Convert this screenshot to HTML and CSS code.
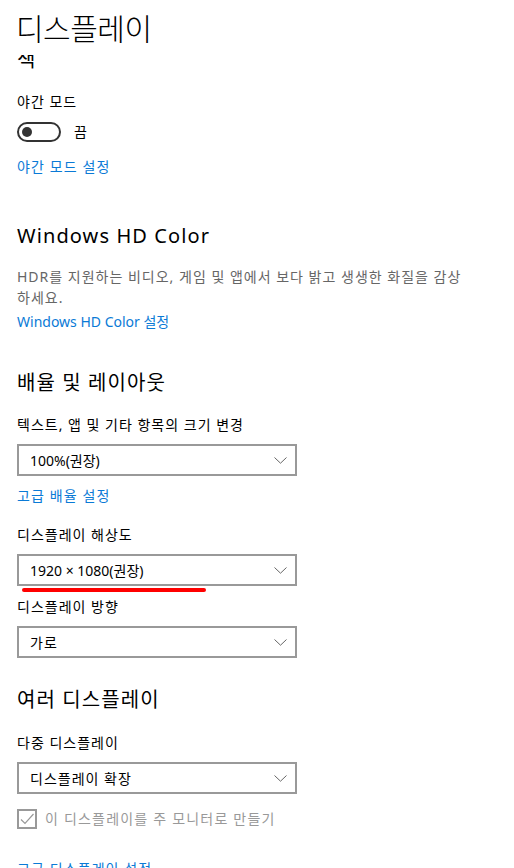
FILE: index.html
```html
<!DOCTYPE html>
<html lang="ko">
<head>
  <meta charset="UTF-8">
  <meta name="viewport" content="width=device-width, initial-scale=1.0">
  <title>디스플레이</title>
  <link rel="stylesheet" href="styles.css">
</head>
<body>
  <header class="page-header">
    <h1>디스플레이</h1>
  </header>

  <main class="content">
    <!-- 스크롤로 가려진 "색" 섹션 제목 -->
    <div class="clipped">
      <h2 class="clipped-title">색</h2>
    </div>

    <p class="label gap-night">야간 모드</p>
    <div class="toggle-row">
      <span class="toggle"><span class="knob"></span></span>
      <span class="toggle-text">끔</span>
    </div>
    <a class="link gap-15" href="#">야간 모드 설정</a>

    <h2 class="section-title gap-45">Windows HD Color</h2>
    <p class="desc">HDR를 지원하는 비디오, 게임 및 앱에서 보다 밝고 생생한 화질을 감상하세요.</p>
    <a class="link latin gap-4" href="#">Windows HD Color 설정</a>

    <h2 class="section-title gap-37">배율 및 레이아웃</h2>
    <p class="label gap-18">텍스트, 앱 및 기타 항목의 크기 변경</p>
    <div class="select">
      <span>100%(권장)</span>
      <svg class="chevron" width="13" height="7" viewBox="0 0 13 7"><path d="M0.5 0.5 L6.5 6.2 L12.5 0.5" fill="none" stroke="#666" stroke-width="1"/></svg>
    </div>
    <a class="link gap-10" href="#">고급 배율 설정</a>

    <p class="label gap-19">디스플레이 해상도</p>
    <div class="select-wrap">
      <div class="select">
        <span>1920 × 1080(권장)</span>
        <svg class="chevron" width="13" height="7" viewBox="0 0 13 7"><path d="M0.5 0.5 L6.5 6.2 L12.5 0.5" fill="none" stroke="#666" stroke-width="1"/></svg>
      </div>
      <span class="mark"></span>
    </div>

    <p class="label gap-11">디스플레이 방향</p>
    <div class="select">
      <span class="wide">가로</span>
      <svg class="chevron" width="13" height="7" viewBox="0 0 13 7"><path d="M0.5 0.5 L6.5 6.2 L12.5 0.5" fill="none" stroke="#666" stroke-width="1"/></svg>
    </div>

    <h2 class="section-title gap-28">여러 디스플레이</h2>
    <p class="label gap-19">다중 디스플레이</p>
    <div class="select">
      <span class="wide">디스플레이 확장</span>
      <svg class="chevron" width="13" height="7" viewBox="0 0 13 7"><path d="M0.5 0.5 L6.5 6.2 L12.5 0.5" fill="none" stroke="#666" stroke-width="1"/></svg>
    </div>

    <div class="check-row">
      <span class="checkbox">
        <svg width="16" height="16" viewBox="0 0 16 16"><path d="M2 8.5 L6 12.5 L14.5 3" fill="none" stroke="#999" stroke-width="1.2"/></svg>
      </span>
      <span class="check-text">이 디스플레이를 주 모니터로 만들기</span>
    </div>

    <a class="link gap-30" href="#">고급 디스플레이 설정</a>
  </main>
</body>
</html>
```

FILE: styles.css
```css
body {
  margin: 0;
  background: #ffffff;
  color: #000;
  font-family: "Noto Sans", "Noto Sans CJK KR", sans-serif;
  width: 514px;
  height: 868px;
  overflow: hidden;
}
.page-header {
  height: 55px;
  padding-left: 16px;
}
.page-header h1 {
  margin: 0;
  padding-top: 9px;
  font-size: 30px;
  font-weight: 300;
  line-height: 40px;
  letter-spacing: -0.5px;
}
.content {
  padding-left: 17px;
}
/* 헤더 아래로 스크롤되어 윗부분이 잘린 제목 */
.clipped {
  height: 14px;
  display: flex;
  align-items: flex-end;
  overflow: hidden;
}
.clipped-title {
  flex: none;
  margin: 0;
  font-family: "Noto Sans CJK KR", sans-serif;
  font-size: 20px;
  font-weight: 400;
  line-height: 20px;
}
.section-title {
  margin: 0;
  font-size: 20px;
  font-weight: 400;
  line-height: 28px;
  letter-spacing: 1.1px;
}
.label {
  margin: 0;
  font-size: 14px;
  line-height: 20px;
  letter-spacing: 1px;
}
.desc {
  margin: 16px 0 0;
  width: 450px;
  font-size: 14px;
  line-height: 21px;
  letter-spacing: 1px;
  color: #666;
}
.link {
  display: block;
  font-size: 14px;
  line-height: 20px;
  letter-spacing: 1.1px;
  color: #0a7ad6;
  text-decoration: none;
}
.link.latin {
  letter-spacing: 0;
}

/* 간격 */
.gap-night { margin-top: 23px; }
.gap-4 { margin-top: 4px; }
.gap-10 { margin-top: 10px; }
.gap-11 { margin-top: 11px; }
.gap-15 { margin-top: 15px; }
.gap-18 { margin-top: 18px; }
.gap-19 { margin-top: 19px; }
.gap-28 { margin-top: 28px; }
.gap-30 { margin-top: 30px; }
.gap-37 { margin-top: 37px; }
.gap-45 { margin-top: 45px; }

/* 토글 */
.toggle-row {
  margin-top: 10px;
  display: flex;
  align-items: center;
  gap: 13px;
  height: 20px;
}
.toggle {
  box-sizing: border-box;
  width: 44px;
  height: 20px;
  border: 2px solid #333;
  border-radius: 10px;
  display: flex;
  align-items: center;
  padding-left: 3px;
}
.knob {
  width: 10px;
  height: 10px;
  border-radius: 50%;
  background: #333;
}
.toggle-text {
  font-size: 14px;
  line-height: 20px;
}

/* 드롭다운 */
.select {
  box-sizing: border-box;
  margin-top: 9px;
  width: 280px;
  height: 32px;
  border: 2px solid #999;
  display: flex;
  align-items: center;
  justify-content: space-between;
  padding: 0 8px 0 11px;
  font-size: 14px;
}
.select .wide {
  letter-spacing: 1px;
}
.select-wrap {
  position: relative;
}
.mark {
  position: absolute;
  left: 5px;
  bottom: -6px;
  width: 184px;
  height: 4px;
  border-radius: 2px;
  background: #ff0000;
}

/* 체크박스 */
.check-row {
  margin-top: 15px;
  display: flex;
  align-items: center;
  gap: 8px;
  height: 20px;
}
.checkbox {
  box-sizing: border-box;
  width: 20px;
  height: 20px;
  border: 2px solid #999;
  display: flex;
  align-items: center;
  justify-content: center;
}
.check-text {
  font-size: 14px;
  line-height: 20px;
  letter-spacing: 1.2px;
  color: #999;
}
```
